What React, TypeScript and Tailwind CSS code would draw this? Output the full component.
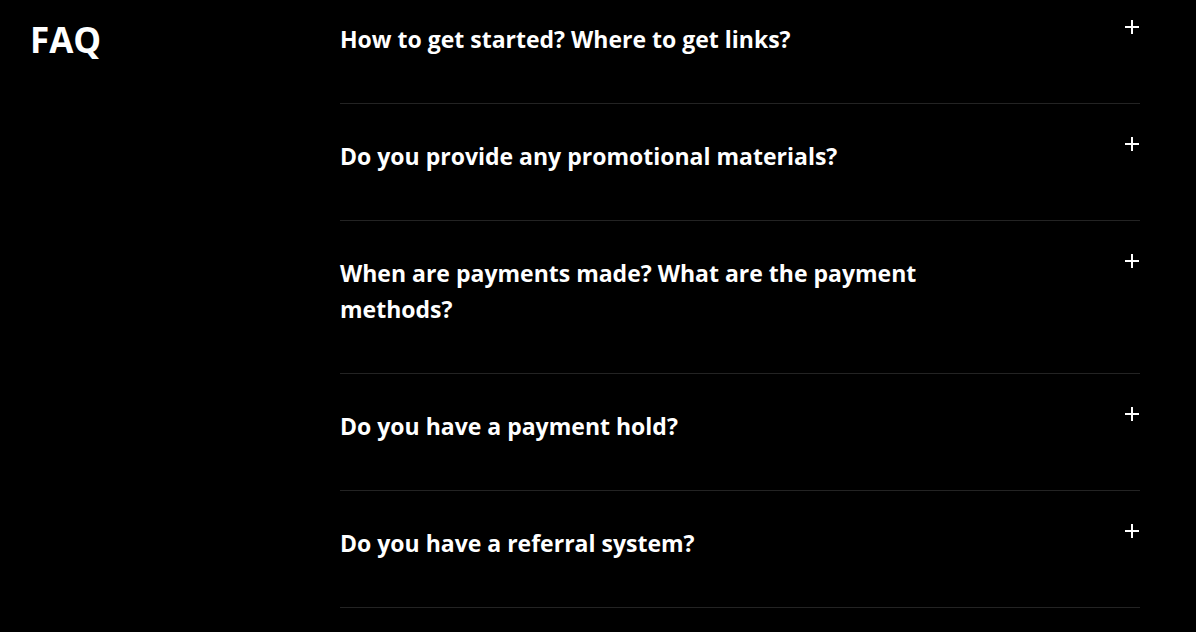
import React from "react";

const items = [
  "How to get started? Where to get links?",
  "Do you provide any promotional materials?",
  "When are payments made? What are the payment methods?",
  "Do you have a payment hold?",
  "Do you have a referral system?",
];

function Plus() {
  return (
    <svg width="16" height="16" viewBox="0 0 16 16" className="shrink-0 mt-[-2px]">
      <path d="M8 1v14M1 8h14" stroke="white" strokeWidth="2" />
    </svg>
  );
}

export default function App() {
  return (
    <div
      className="min-h-[632px] w-[1196px] bg-black text-white overflow-hidden"
      style={{ fontFamily: '"Open Sans", "Noto Sans", sans-serif' }}
    >
      <div className="flex">
        <div className="w-[340px] shrink-0 pl-[30px] pt-[16px]">
          <h2 className="text-[35px] leading-[48px] font-bold">FAQ</h2>
        </div>
        <div className="w-[800px] -mt-[13px]">
          {items.map((q) => (
            <div
              key={q}
              className="flex items-start justify-between border-b border-[#232323] pt-[34px] pb-[46px]"
            >
              <div className="max-w-[640px] text-[23px] leading-[36px] font-bold">{q}</div>
              <Plus />
            </div>
          ))}
        </div>
      </div>
    </div>
  );
}
